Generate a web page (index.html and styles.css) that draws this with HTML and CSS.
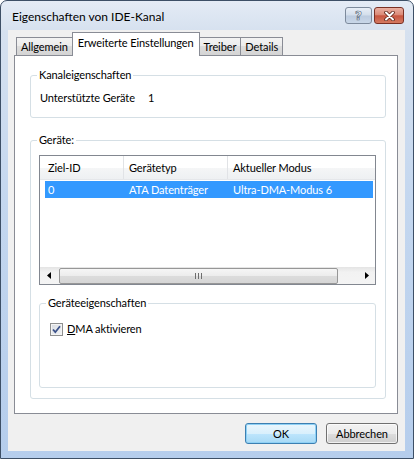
FILE: index.html
```html
<!DOCTYPE html>
<html lang="de">
<head>
    <meta charset="UTF-8">
    <meta name="viewport" content="width=device-width, initial-scale=1.0">
    <title>Eigenschaften von IDE-Kanal</title>
    <link rel="stylesheet" href="styles.css">
</head>
<body>
    <div class="window">
        <!-- Title bar -->
        <div class="titlebar">
            <span class="title">Eigenschaften von IDE-Kanal</span>
            <div class="caption-buttons">
                <span class="cap-btn help">?</span>
                <span class="cap-btn close">
                    <svg width="13" height="10" viewBox="0 0 13 10">
                        <path d="M3 1.5 L10 8.5 M10 1.5 L3 8.5" stroke="#5a2418" stroke-width="3.6" stroke-linecap="round" fill="none"/>
                        <path d="M3 1.5 L10 8.5 M10 1.5 L3 8.5" stroke="#ffffff" stroke-width="2" stroke-linecap="round" fill="none"/>
                    </svg>
                </span>
            </div>
        </div>

        <div class="client">
            <!-- Tabs -->
            <ul class="tabs">
                <li class="tab">Allgemein</li>
                <li class="tab active">Erweiterte Einstellungen</li>
                <li class="tab">Treiber</li>
                <li class="tab">Details</li>
            </ul>

            <div class="panel">
                <fieldset class="group">
                    <legend>Kanaleigenschaften</legend>
                    <div class="prop-row">
                        <span class="prop-label">Unterstützte Geräte</span>
                        <span>1</span>
                    </div>
                </fieldset>

                <fieldset class="group devices">
                    <legend>Geräte:</legend>
                    <div class="listview">
                        <div class="lv-header">
                            <div class="lv-col">Ziel-ID</div>
                            <div class="lv-col">Gerätetyp</div>
                            <div class="lv-col">Aktueller Modus</div>
                        </div>
                        <div class="lv-body">
                            <div class="lv-row selected">
                                <div class="lv-cell">0</div>
                                <div class="lv-cell">ATA Datenträger</div>
                                <div class="lv-cell">Ultra-DMA-Modus 6</div>
                            </div>
                        </div>
                        <div class="hscroll">
                            <span class="sb-arrow">
                                <svg width="4" height="7" viewBox="0 0 4 7"><path d="M4 0 L0 3.5 L4 7 Z" fill="#000"/></svg>
                            </span>
                            <div class="sb-track">
                                <div class="sb-thumb"><span class="grip"></span></div>
                            </div>
                            <span class="sb-arrow">
                                <svg width="4" height="7" viewBox="0 0 4 7"><path d="M0 0 L4 3.5 L0 7 Z" fill="#000"/></svg>
                            </span>
                        </div>
                    </div>

                    <fieldset class="group sub">
                        <legend>Geräteeigenschaften</legend>
                        <label class="check">
                            <span class="checkbox">
                                <svg width="13" height="13" viewBox="0 0 13 13">
                                    <path d="M3 6.5 L5.3 9.2 L10 3.2" stroke="#3b5189" stroke-width="1.8" fill="none"/>
                                </svg>
                            </span>
                            <span><u>D</u>MA aktivieren</span>
                        </label>
                    </fieldset>
                </fieldset>
            </div>

            <div class="buttons">
                <button class="btn default">OK</button>
                <button class="btn">Abbrechen</button>
            </div>
        </div>
    </div>
</body>
</html>
```

FILE: styles.css
```css
body {
    margin: 0;
    padding: 0;
    width: 414px;
    height: 459px;
    overflow: hidden;
    background-color: #ffffff;
    font-family: 'Lato', 'Open Sans', sans-serif;
    font-size: 11px;
    letter-spacing: -0.1px;
    color: #000;
}

/* Window frame */
.window {
    box-sizing: border-box;
    width: 414px;
    height: 459px;
    border: 1px solid #3d4f66;
    border-radius: 7px 7px 0 0;
    background: linear-gradient(to bottom, #e4ebf5 0px, #d6e1ef 30px, #c4d7ef 200px, #b5cdec 100%);
    padding: 0 8px 7px 7px;
    display: flex;
    flex-direction: column;
}

.titlebar {
    height: 29px;
    display: flex;
    align-items: flex-start;
    justify-content: space-between;
}

.title {
    margin-top: 8px;
    padding-left: 4px;
    font-size: 12px;
    letter-spacing: 0;
    color: #000;
}

.caption-buttons {
    display: flex;
    gap: 2px;
    margin-top: 6px;
    margin-right: 1px;
}

.cap-btn {
    box-sizing: border-box;
    height: 17px;
    border-radius: 3px;
    display: flex;
    align-items: center;
    justify-content: center;
}

.help {
    width: 27px;
    border: 1px solid #7d8a9c;
    background: linear-gradient(to bottom, #e8eef6 0%, #d3deeb 48%, #bccbdf 52%, #c9d7e8 100%);
    color: #f4f6f9;
    font-family: 'DejaVu Sans', sans-serif;
    font-weight: bold;
    font-size: 12px;
    -webkit-text-stroke: 0.7px #5d6c80;
}

.close {
    width: 30px;
    border: 1px solid #7a3024;
    background: linear-gradient(to bottom, #eab0a2 0%, #db8a77 45%, #c7553f 52%, #d47a62 100%);
}

/* Client area */
.client {
    flex: 1;
    background-color: #f0f0f0;
    padding: 2px 7px 7px 6px;
    display: flex;
    flex-direction: column;
}

/* Tabs */
.tabs {
    list-style: none;
    margin: 0;
    padding: 0 0 0 2px;
    height: 23px;
    display: flex;
    align-items: flex-end;
}

.tab {
    box-sizing: border-box;
    height: 18px;
    line-height: 17px;
    padding: 0 4px;
    border: 1px solid #898c95;
    border-bottom: none;
    margin-right: -1px;
    background: linear-gradient(to bottom, #f3f3f3 0%, #ebebeb 50%, #dddddd 50%, #d4d4d4 100%);
}

.tab.active {
    height: 24px;
    line-height: 20px;
    margin-bottom: -1px;
    position: relative;
    z-index: 1;
    background: #ffffff;
    padding: 0 5px;
}

.panel {
    border: 1px solid #898c95;
    background-color: #ffffff;
    padding: 11px 11px 14px 15px;
}

/* Group boxes */
.group {
    margin: 0;
    min-width: 0;
    border: 1px solid #d5dfe5;
    border-radius: 3px;
    padding: 0 8px 11px 8px;
}

.group legend {
    padding: 0 2px;
    margin-left: -2px;
    line-height: 16px;
    color: #000;
}

.prop-row {
    margin-top: 7px;
    line-height: 16px;
    display: flex;
    padding-left: 1px;
}

.prop-label {
    width: 108px;
}

.devices {
    margin-top: 14px;
    padding-bottom: 10px;
}

/* List view */
.listview {
    box-sizing: border-box;
    height: 130px;
    margin: 7px 1px 0 0;
    border: 1px solid #828790;
    display: flex;
    flex-direction: column;
}

.lv-header {
    height: 24px;
    display: grid;
    grid-template-columns: 84px 104px 1fr;
    background: linear-gradient(to bottom, #ffffff 0%, #ffffff 50%, #f5f6f7 50%, #eef0f2 100%);
    border-bottom: 1px solid #e5e7ea;
    box-sizing: border-box;
}

.lv-col {
    line-height: 23px;
    padding-left: 5px;
    border-right: 1px solid #e1e3e6;
}

.lv-col:first-child {
    padding-left: 8px;
}

.lv-col:last-child {
    border-right: none;
}

.lv-body {
    flex: 1;
}

.lv-row {
    margin: 1px 2px 0 5px;
    height: 17px;
    line-height: 17px;
    display: grid;
    grid-template-columns: 79px 104px 1fr;
}

.lv-row.selected {
    background-color: #3399ff;
    color: #ffffff;
}

.lv-cell {
    padding-left: 5px;
    white-space: nowrap;
}

.lv-cell:first-child {
    padding-left: 3px;
}

/* Horizontal scrollbar */
.hscroll {
    height: 17px;
    display: flex;
    background: linear-gradient(to bottom, #e4e4e4 0%, #f2f2f2 30%, #f4f4f4 100%);
}

.sb-arrow {
    width: 17px;
    display: flex;
    align-items: center;
    justify-content: center;
}

.sb-track {
    flex: 1;
    display: flex;
    align-items: center;
    padding-left: 2px;
}

.sb-thumb {
    box-sizing: border-box;
    width: 279px;
    height: 16px;
    border: 1px solid #979797;
    border-radius: 2px;
    background: linear-gradient(to bottom, #f6f6f6 0%, #ececec 50%, #dcdcdc 51%, #d6d6d6 100%);
    display: flex;
    align-items: center;
    justify-content: center;
}

.grip {
    width: 5px;
    height: 6px;
    border-left: 1px solid #6e6e6e;
    border-right: 1px solid #6e6e6e;
    position: relative;
}

.grip::after {
    content: "";
    position: absolute;
    left: 2px;
    top: 0;
    width: 1px;
    height: 6px;
    background-color: #6e6e6e;
}

.sub {
    margin: 10px 1px 0 0;
    padding-bottom: 50px;
}

.check {
    margin-top: 10px;
    line-height: 16px;
    display: flex;
    align-items: center;
    gap: 4px;
    padding-left: 2px;
}

.checkbox {
    box-sizing: border-box;
    width: 13px;
    height: 13px;
    border: 1px solid #8e8f8f;
    background: linear-gradient(to bottom right, #d7dbe1 0%, #f3f4f5 100%);
    box-shadow: inset 0 0 0 1px #f4f4f4;
    display: flex;
    align-items: center;
    justify-content: center;
}

.checkbox svg {
    margin: -1px;
}

/* Dialog buttons */
.buttons {
    margin-top: 9px;
    display: flex;
    justify-content: flex-end;
    gap: 9px;
}

.btn {
    box-sizing: border-box;
    width: 72px;
    height: 21px;
    padding: 0;
    border: 1px solid #707070;
    border-radius: 3px;
    background: linear-gradient(to bottom, #f2f2f2 0%, #ebebeb 50%, #dddddd 50%, #cfcfcf 100%);
    box-shadow: inset 0 0 0 1px rgba(255, 255, 255, 0.7);
    font-family: 'Lato', 'Open Sans', sans-serif;
    font-size: 11px;
    letter-spacing: -0.1px;
    color: #000;
}

.btn.default {
    border-color: #3c7fb1;
    background: linear-gradient(to bottom, #eaf6fd 0%, #d9f0fc 50%, #bee6fd 50%, #a7d9f5 100%);
    box-shadow: inset 0 0 0 1px #8fd1f5;
}
```
